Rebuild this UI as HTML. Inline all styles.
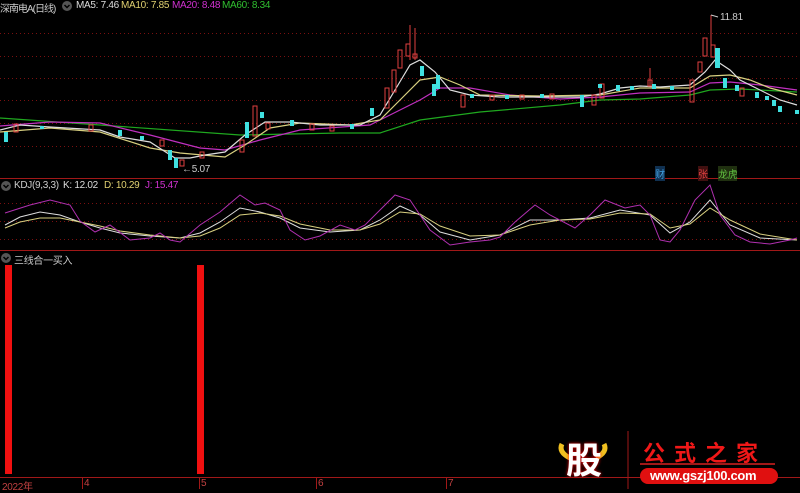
<!DOCTYPE html>
<html><head><meta charset="utf-8"><style>
body{margin:0;background:#000;width:800px;height:489px;overflow:hidden;position:relative;font-family:"Liberation Sans","Noto Sans CJK SC",sans-serif}
.t{position:absolute;font-size:10px;white-space:nowrap;letter-spacing:-0.3px}
</style></head><body>
<svg width="800" height="489" style="position:absolute;left:0;top:0">
<g stroke="#7a1010" stroke-dasharray="1,3" stroke-width="1">
<line x1="0" y1="33.5" x2="800" y2="33.5"/><line x1="0" y1="56.5" x2="800" y2="56.5"/><line x1="0" y1="78.5" x2="800" y2="78.5"/><line x1="0" y1="100.5" x2="800" y2="100.5"/><line x1="0" y1="123.5" x2="800" y2="123.5"/><line x1="0" y1="146.5" x2="800" y2="146.5"/>
<line x1="0" y1="203.5" x2="800" y2="203.5"/><line x1="0" y1="221.5" x2="800" y2="221.5"/><line x1="0" y1="239.5" x2="800" y2="239.5"/>
</g>
<g stroke="#a01818" stroke-width="1">
<line x1="0" y1="178.5" x2="800" y2="178.5"/><line x1="0" y1="250.5" x2="800" y2="250.5"/><line x1="0" y1="477.5" x2="800" y2="477.5"/>
<line x1="82.5" y1="478" x2="82.5" y2="489"/><line x1="199.5" y1="478" x2="199.5" y2="489"/><line x1="316.5" y1="478" x2="316.5" y2="489"/><line x1="446.5" y1="478" x2="446.5" y2="489"/>
</g>
<g fill="none" stroke-width="1.2">
<polyline stroke="#1fa81f" points="0,118 100,125 240,135 340,133 380,133 420,120 480,112 560,105 600,100 640,99 690,95 710,90 740,89 797,92"/>
<polyline stroke="#c030c0" points="0,126 50,122 100,123 150,135 200,148 225,150 260,140 300,130 370,125 400,110 420,100 440,88 470,88 510,95 560,99 600,97 640,93 690,92 710,83 730,82 760,85 797,90"/>
<polyline stroke="#d8d080" points="0,132 50,128 100,132 150,148 180,153 225,157 245,145 270,128 300,123 350,125 380,120 400,100 420,80 440,77 460,85 480,95 540,96 600,95 640,88 690,88 710,76 730,75 750,80 770,88 797,95"/>
<polyline stroke="#dddddd" points="0,130 20,125 50,127 100,130 120,137 150,142 175,158 190,158 205,155 225,152 245,135 265,122 290,122 320,125 360,125 380,115 395,90 410,65 420,60 435,72 450,90 470,95 500,97 540,97 580,97 600,94 620,88 640,86 660,87 690,85 705,72 715,60 730,70 740,80 760,90 780,100 797,105"/>
</g>
<g stroke="#e04040" fill="none" stroke-width="1">
<rect x="14" y="124" width="4" height="8"/><rect x="22" y="100" width="4" height="0"/><rect x="89" y="125" width="4" height="6"/><rect x="160" y="140" width="4" height="6"/><rect x="180" y="160" width="4" height="6"/><rect x="200" y="152" width="4" height="6"/>
<rect x="240" y="140" width="4" height="12"/><rect x="253" y="106" width="4" height="30"/><rect x="266" y="123" width="4" height="6"/><rect x="310" y="124" width="4" height="6"/><rect x="330" y="126" width="4" height="5"/><rect x="385" y="88" width="4" height="20"/><rect x="392" y="70" width="4" height="22"/><rect x="398" y="50" width="4" height="18"/><rect x="406" y="44" width="4" height="12"/><line x1="410" y1="25" x2="410" y2="60"/><line x1="415" y1="28" x2="415" y2="60"/><rect x="413" y="54" width="4" height="4"/>
<rect x="461" y="95" width="4" height="12"/><rect x="490" y="95" width="4" height="5"/><rect x="520" y="95" width="4" height="4"/><rect x="550" y="94" width="4" height="5"/><rect x="592" y="95" width="4" height="10"/><rect x="600" y="84" width="4" height="14"/><rect x="648" y="80" width="4" height="6"/><line x1="650" y1="68" x2="650" y2="86"/><rect x="690" y="80" width="4" height="22"/><rect x="698" y="62" width="4" height="10"/><rect x="703" y="38" width="4" height="18"/><rect x="711" y="45" width="4" height="12"/><line x1="711" y1="15" x2="711" y2="45"/><rect x="740" y="88" width="4" height="8"/>
</g>
<g fill="#40e0e0">
<rect x="4" y="132" width="4" height="10"/><rect x="40" y="126" width="4" height="3"/><rect x="118" y="130" width="4" height="6"/><rect x="140" y="136" width="4" height="4"/><rect x="168" y="150" width="4" height="10"/><rect x="174" y="158" width="4" height="10"/><rect x="245" y="122" width="4" height="16"/><rect x="260" y="112" width="4" height="6"/><rect x="290" y="120" width="4" height="6"/><rect x="350" y="124" width="4" height="5"/><rect x="370" y="108" width="4" height="8"/><rect x="420" y="66" width="4" height="10"/><rect x="432" y="84" width="4" height="12"/><rect x="436" y="75" width="4" height="14"/><rect x="470" y="94" width="4" height="4"/><rect x="505" y="95" width="4" height="4"/><rect x="540" y="94" width="4" height="4"/><rect x="580" y="95" width="4" height="12"/><rect x="598" y="84" width="4" height="4"/><rect x="616" y="85" width="4" height="6"/><rect x="630" y="86" width="4" height="4"/><rect x="652" y="84" width="4" height="5"/><rect x="670" y="86" width="4" height="4"/><rect x="715" y="48" width="5" height="20"/><rect x="723" y="78" width="4" height="10"/><rect x="735" y="85" width="4" height="6"/><rect x="755" y="92" width="4" height="6"/><rect x="765" y="96" width="4" height="4"/><rect x="772" y="100" width="4" height="6"/><rect x="778" y="106" width="4" height="6"/><rect x="795" y="110" width="4" height="4"/>
</g>
<line x1="711" y1="15" x2="718" y2="17" stroke="#ccc"/>
<g fill="none" stroke-width="1">
<polyline stroke="#ddd" points="5,225 20,217 40,212 60,215 80,222 100,228 120,233 150,236 180,238 200,233 220,222 240,208 260,212 280,218 300,228 330,232 360,230 380,220 400,206 420,215 440,232 470,240 500,235 530,220 560,220 590,218 620,210 650,215 670,233 690,222 710,200 730,225 760,238 797,240"/>
<polyline stroke="#d8d080" points="5,228 20,222 40,218 60,218 80,222 100,226 120,231 150,235 180,238 200,236 220,228 240,215 260,213 280,216 300,224 330,230 360,230 380,224 400,212 420,214 440,226 470,236 500,235 530,225 560,220 590,219 620,213 650,214 670,228 690,224 710,208 730,220 760,234 797,240"/>
<polyline stroke="#b030b0" points="5,213 30,205 50,200 70,205 80,221 95,232 110,225 130,240 150,238 160,233 170,240 180,242 200,225 220,212 240,195 255,205 265,203 280,210 290,230 305,240 320,236 340,225 355,230 365,225 380,210 395,195 410,200 430,230 450,245 470,242 490,240 500,237 515,222 535,205 550,215 575,228 590,215 605,200 625,208 640,205 650,215 660,240 670,242 680,230 695,200 710,185 720,215 735,235 750,242 770,244 790,240 797,238"/>
</g>
<rect x="5" y="265" width="7" height="209" fill="#f01010"/>
<rect x="197" y="265" width="7" height="209" fill="#f01010"/>
<circle cx="67" cy="6" r="5" fill="#555"/><circle cx="6" cy="186" r="5" fill="#555"/><circle cx="6" cy="258" r="5" fill="#555"/>
<path d="M64.5,5 L67,7.5 L69.5,5 M3.5,185 L6,187.5 L8.5,185 M3.5,257 L6,259.5 L8.5,257" stroke="#000" fill="none" stroke-width="1.5"/>
<line x1="628" y1="431" x2="628" y2="489" stroke="#a01818"/>
<rect x="640" y="463" width="135" height="2" fill="#a01818"/>
<rect x="640" y="468" width="138" height="16" rx="8" fill="#e01010"/>
<path d="M562,444 Q558,452 570,458 M604,444 Q608,452 596,458" stroke="#f0c020" stroke-width="5" fill="none"/>
</svg>
<div class="t" style="left:0;top:0;color:#ccc;letter-spacing:-1px">深南电A(日线)</div>
<div class="t" style="left:76px;top:0;color:#ddd">MA5: 7.46</div>
<div class="t" style="left:121px;top:0;color:#e0d070">MA10: 7.85</div>
<div class="t" style="left:172px;top:0;color:#d030d0">MA20: 8.48</div>
<div class="t" style="left:222px;top:0;color:#30c030">MA60: 8.34</div>
<div class="t" style="left:720px;top:12px;color:#ccc">11.81</div>
<div class="t" style="left:182px;top:164px;color:#ccc">←5.07</div>
<div class="t" style="left:655px;top:166px;color:#40a0e0;background:#103050">财</div>
<div class="t" style="left:698px;top:166px;color:#e04040;background:#401010">张</div>
<div class="t" style="left:718px;top:166px;color:#60c040;background:#203010">龙虎</div>
<div class="t" style="left:14px;top:180px;color:#ccc">KDJ(9,3,3)</div>
<div class="t" style="left:63px;top:180px;color:#ddd">K: 12.02</div>
<div class="t" style="left:104px;top:180px;color:#e0d070">D: 10.29</div>
<div class="t" style="left:145px;top:180px;color:#d030d0">J: 15.47</div>
<div class="t" style="left:14px;top:252px;color:#ccc">三线合一买入</div>
<div class="t" style="left:2px;top:478px;color:#c04040">2022年</div>
<div class="t" style="left:84px;top:478px;color:#c04040">4</div>
<div class="t" style="left:201px;top:478px;color:#c04040">5</div>
<div class="t" style="left:318px;top:478px;color:#c04040">6</div>
<div class="t" style="left:448px;top:478px;color:#c04040">7</div>
<div class="t" style="left:566px;top:432px;color:#fff;font-size:36px;font-weight:bold;text-shadow:0 0 3px #f00">股</div>
<div class="t" style="left:643px;top:436px;color:#f01818;font-size:22px;font-weight:bold;letter-spacing:9px">公式之家</div>
<div class="t" style="left:650px;top:468px;color:#fff;font-size:13px;font-weight:bold">www.gszj100.com</div>
</body></html>
